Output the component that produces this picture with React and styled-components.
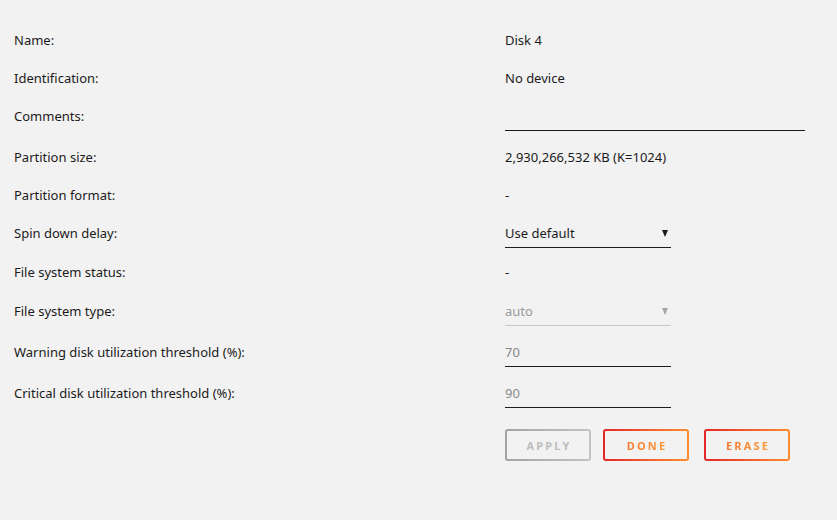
import React from 'react'
import styled, { createGlobalStyle, css } from 'styled-components'

const GlobalStyle = createGlobalStyle`
  html, body {
    margin: 0;
    padding: 0;
    background: #f2f2f2;
  }
  body {
    font-family: "Noto Sans", "Liberation Sans", sans-serif;
    font-size: 13px;
    color: #1c1b1b;
  }
`

const Page = styled.div`
  width: 837px;
  height: 520px;
  padding: 21px 0 0 14px;
  box-sizing: border-box;
`

const Row = styled.div`
  display: grid;
  grid-template-columns: 491px 1fr;
  align-items: center;
  height: 38px;
  margin-top: ${p => p.$space || 0}px;
`

const Label = styled.div`
  line-height: 16px;
`

const Value = styled.div`
  line-height: 16px;
`

const Field = styled.div`
  width: ${p => p.$width}px;
  height: 30px;
  box-sizing: border-box;
  display: flex;
  align-items: center;
  padding-top: 1px;
  border-bottom: 1px solid ${p => (p.$disabled ? '#c8c8c8' : '#1c1b1b')};
  color: ${p => (p.$disabled ? '#9a9a9a' : '#1c1b1b')};
`

const FieldText = styled.span`
  color: ${p => (p.$muted ? '#8a8a8a' : 'inherit')};
`

const Arrow = styled.span`
  margin-left: auto;
  margin-right: 3px;
  width: 0;
  height: 0;
  border-left: 3.5px solid transparent;
  border-right: 3.5px solid transparent;
  border-top: 7px solid ${p => (p.$disabled ? '#a5a5a5' : '#1c1b1b')};
`

const Buttons = styled.div`
  display: flex;
  margin: 17px 0 0 491px;
`

const Button = styled.button`
  width: 86px;
  height: 32px;
  padding: 0;
  margin-left: ${p => p.$offset || 0}px;
  border: 2px solid transparent;
  border-radius: 3px;
  font-family: "Noto Sans", "Liberation Sans", sans-serif;
  font-size: 11px;
  font-weight: 700;
  letter-spacing: 2.2px;
  cursor: pointer;

  ${p => p.disabled
    ? css`
      background: linear-gradient(#f2f2f2, #f2f2f2) padding-box,
        linear-gradient(90deg, #a3a3a3, #c4c4c4) border-box;
      color: #bdbdbd;
      cursor: default;
    `
    : css`
      background: linear-gradient(#f2f2f2, #f2f2f2) padding-box,
        linear-gradient(90deg, #e22828, #ff8c2f) border-box;
    `}
`

const ButtonText = styled.span`
  padding-left: 2px;
  ${p => !p.$plain && css`
    background: linear-gradient(90deg, #f57a2e, #ff9432);
    -webkit-background-clip: text;
    background-clip: text;
    color: transparent;
  `}
`

const rows = [
  { label: 'Name:', value: 'Disk 4' },
  { label: 'Identification:', value: 'No device' },
  { label: 'Comments:', field: { width: 300, text: '' } },
  { label: 'Partition size:', value: '2,930,266,532 KB (K=1024)', space: 3 },
  { label: 'Partition format:', value: '-' },
  { label: 'Spin down delay:', field: { width: 166, text: 'Use default', select: true } },
  { label: 'File system status:', value: '-', space: 1 },
  { label: 'File system type:', field: { width: 166, text: 'auto', select: true, disabled: true }, space: 1 },
  { label: 'Warning disk utilization threshold (%):', field: { width: 166, text: '70', muted: true }, space: 3 },
  { label: 'Critical disk utilization threshold (%):', field: { width: 166, text: '90', muted: true }, space: 3 },
]

export default function App() {
  return (
    <Page>
      <GlobalStyle />
      {rows.map(({ label, value, field, space }) => (
        <Row key={label} $space={space}>
          <Label>{label}</Label>
          {field ? (
            <Field $width={field.width} $disabled={field.disabled}>
              <FieldText $muted={field.muted}>{field.text}</FieldText>
              {field.select && <Arrow $disabled={field.disabled} />}
            </Field>
          ) : (
            <Value>{value}</Value>
          )}
        </Row>
      ))}
      <Buttons>
        <Button disabled><ButtonText $plain>APPLY</ButtonText></Button>
        <Button $offset={12}><ButtonText>DONE</ButtonText></Button>
        <Button $offset={15}><ButtonText>ERASE</ButtonText></Button>
      </Buttons>
    </Page>
  )
}
